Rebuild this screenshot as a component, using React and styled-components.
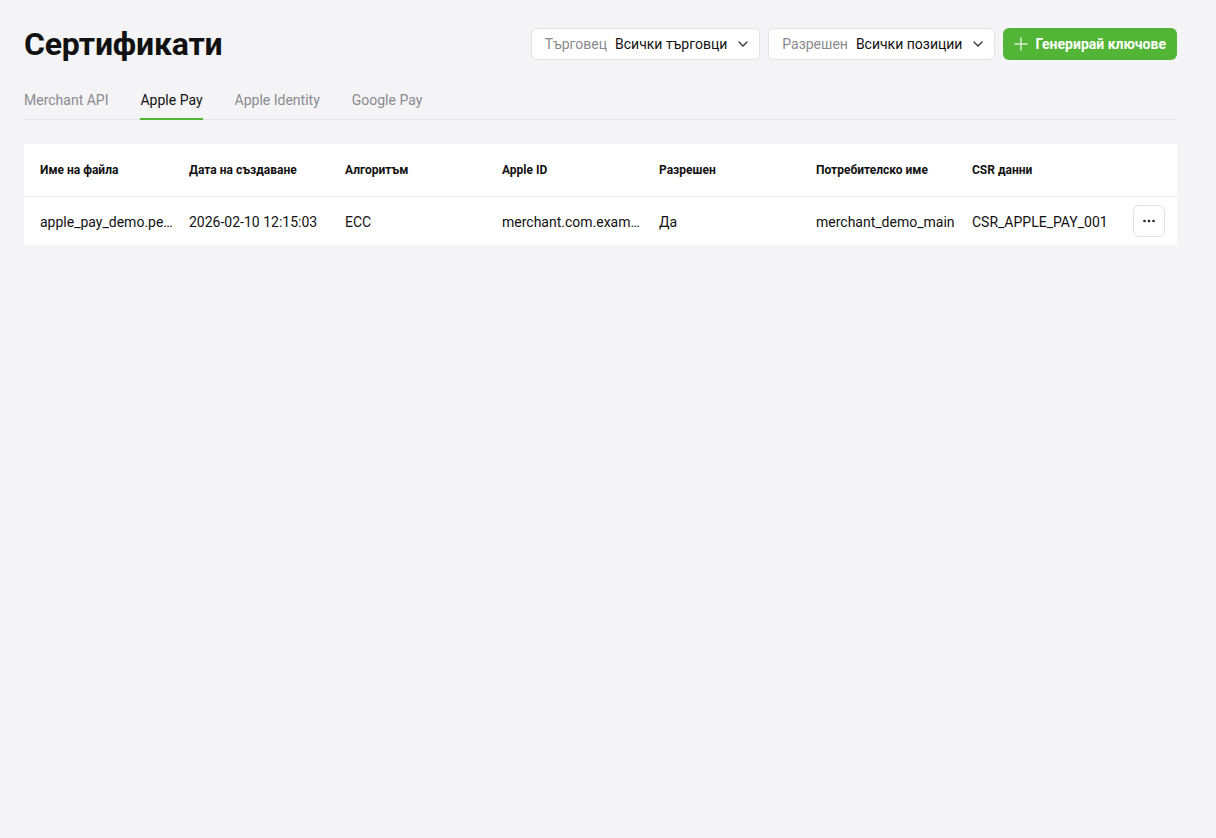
import React from "react";
import styled, { createGlobalStyle } from "styled-components";

const GlobalStyle = createGlobalStyle`
  html, body {
    margin: 0;
    background: #f4f4f6;
    font-family: Roboto, "Noto Sans", sans-serif;
    color: #111;
  }
`;

const Page = styled.div`
  padding: 24px 39px 24px 24px;
  min-height: 790px;
`;

const Header = styled.div`
  display: flex;
  align-items: center;
  justify-content: space-between;
  height: 40px;
`;

const Title = styled.h1`
  margin: 0;
  font-size: 32px;
  font-weight: 700;
  letter-spacing: -0.2px;
  color: #111;
`;

const Actions = styled.div`
  display: flex;
  gap: 8px;
  align-items: center;
`;

const Select = styled.button`
  display: flex;
  align-items: center;
  height: 32px;
  box-sizing: border-box;
  padding: 0 10px 0 13px;
  background: #fff;
  border: 1px solid #e2e2e6;
  border-radius: 6px;
  font-family: inherit;
  font-size: 14px;
  cursor: pointer;
`;

const SelectLabel = styled.span`
  color: #8a8a8f;
  margin-right: 8px;
`;

const SelectValue = styled.span`
  color: #111;
  margin-right: 10px;
`;

const PrimaryButton = styled.button`
  display: flex;
  align-items: center;
  gap: 7px;
  height: 32px;
  padding: 0 11px;
  background: #52b535;
  color: #fff;
  border: none;
  border-radius: 6px;
  font-family: inherit;
  font-size: 14px;
  font-weight: 700;
  cursor: pointer;
`;

const Tabs = styled.div`
  display: flex;
  gap: 32px;
  margin-top: 24px;
  border-bottom: 1px solid #e4e4e8;
`;

const Tab = styled.div`
  font-size: 14px;
  padding: 4px 0 10px;
  color: ${(p) => (p.$active ? "#111" : "#8a8a8f")};
  border-bottom: 2px solid ${(p) => (p.$active ? "#52b535" : "transparent")};
  margin-bottom: -1px;
`;

const Card = styled.div`
  margin-top: 24px;
  background: #fff;
`;

const Table = styled.table`
  width: 100%;
  border-collapse: collapse;
  table-layout: fixed;
`;

const Th = styled.th`
  text-align: left;
  font-size: 12px;
  font-weight: 700;
  height: 52px;
  padding: 0 0 0 16px;
  border-bottom: 1px solid #ebebee;
  white-space: nowrap;
`;

const Td = styled.td`
  font-size: 14px;
  height: 47px;
  padding: 1px 0 0 16px;
  white-space: nowrap;
  overflow: hidden;
  text-overflow: ellipsis;
`;

const ActionCell = styled.td`
  text-align: right;
  padding: 0 12px 0 0;
`;

const MoreButton = styled.button`
  width: 32px;
  height: 32px;
  background: #fff;
  border: 1px solid #e2e2e6;
  border-radius: 6px;
  display: inline-flex;
  align-items: center;
  justify-content: center;
  padding: 0;
  cursor: pointer;
`;

const Chevron = () => (
  <svg width="12" height="12" viewBox="0 0 12 12" fill="none">
    <path d="M2 4l4 4 4-4" stroke="#333" strokeWidth="1.3" strokeLinecap="round" strokeLinejoin="round" />
  </svg>
);

const Plus = () => (
  <svg width="14" height="14" viewBox="0 0 14 14" fill="none">
    <path d="M7 1v12M1 7h12" stroke="#d7efcf" strokeWidth="1.5" strokeLinecap="round" />
  </svg>
);

const Dots = () => (
  <svg width="14" height="4" viewBox="0 0 14 4">
    <circle cx="2.5" cy="2" r="1.3" fill="#222" />
    <circle cx="7" cy="2" r="1.3" fill="#222" />
    <circle cx="11.5" cy="2" r="1.3" fill="#222" />
  </svg>
);

const columns = [
  { title: "Име на файла", width: 149 },
  { title: "Дата на създаване", width: 156 },
  { title: "Алгоритъм", width: 157 },
  { title: "Apple ID", width: 157 },
  { title: "Разрешен", width: 157 },
  { title: "Потребителско име", width: 156 },
  { title: "CSR данни", width: 165 },
];

const rows = [
  [
    "apple_pay_demo.pem",
    "2026-02-10 12:15:03",
    "ECC",
    "merchant.com.example.demo",
    "Да",
    "merchant_demo_main",
    "CSR_APPLE_PAY_001",
  ],
];

const App = () => {
  return (
    <>
      <GlobalStyle />
      <Page>
        <Header>
          <Title>Сертификати</Title>
          <Actions>
            <Select>
              <SelectLabel>Търговец</SelectLabel>
              <SelectValue>Всички търговци</SelectValue>
              <Chevron />
            </Select>
            <Select>
              <SelectLabel>Разрешен</SelectLabel>
              <SelectValue>Всички позиции</SelectValue>
              <Chevron />
            </Select>
            <PrimaryButton>
              <Plus />
              Генерирай ключове
            </PrimaryButton>
          </Actions>
        </Header>

        <Tabs>
          <Tab>Merchant API</Tab>
          <Tab $active>Apple Pay</Tab>
          <Tab>Apple Identity</Tab>
          <Tab>Google Pay</Tab>
        </Tabs>

        <Card>
          <Table>
            <colgroup>
              {columns.map((c) => (
                <col key={c.title} style={{ width: c.width }} />
              ))}
              <col />
            </colgroup>
            <thead>
              <tr>
                {columns.map((c) => (
                  <Th key={c.title}>{c.title}</Th>
                ))}
                <Th />
              </tr>
            </thead>
            <tbody>
              {rows.map((r, i) => (
                <tr key={i}>
                  {r.map((v, j) => (
                    <Td key={j}>{v}</Td>
                  ))}
                  <ActionCell>
                    <MoreButton>
                      <Dots />
                    </MoreButton>
                  </ActionCell>
                </tr>
              ))}
            </tbody>
          </Table>
        </Card>
      </Page>
    </>
  );
};

export default App;
